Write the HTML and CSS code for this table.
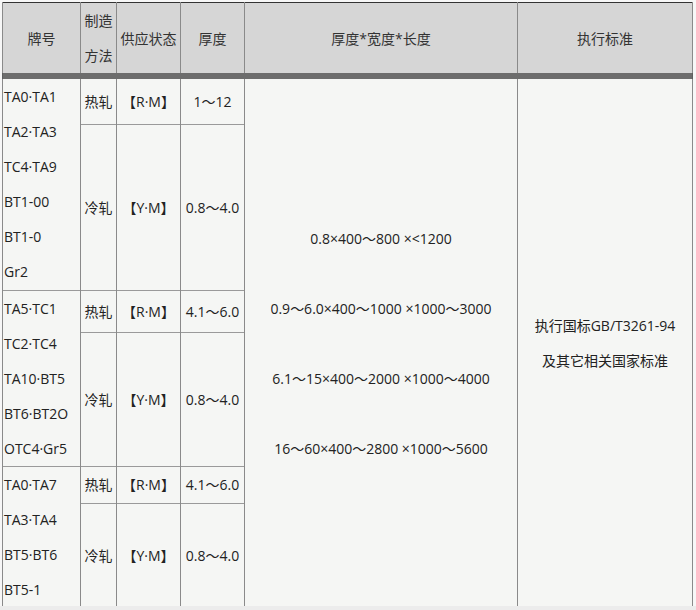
FILE: index.html
```html
<!DOCTYPE html>
<html lang="zh">
<head>
<meta charset="utf-8">
<title>钛板规格</title>
<link rel="stylesheet" href="styles.css">
</head>
<body>
<div class="wrap">
<table class="spec">
  <colgroup>
    <col class="c1"><col class="c2"><col class="c3"><col class="c4"><col class="c5"><col class="c6">
  </colgroup>
  <thead>
    <tr class="head">
      <th>牌号</th>
      <th class="narrow">制造方法</th>
      <th>供应状态</th>
      <th>厚度</th>
      <th>厚度*宽度*长度</th>
      <th>执行标准</th>
    </tr>
    <tr class="band"><td colspan="6"></td></tr>
  </thead>
  <tbody>
    <tr class="r1">
      <td rowspan="2" class="grade">TA0·TA1<br>TA2·TA3<br>TC4·TA9<br>BT1-00<br>BT1-0<br>Gr2</td>
      <td>热轧</td>
      <td>【R·M】</td>
      <td>1～12</td>
      <td rowspan="6" class="sizes">
        <p>0.8×400～800 ×&lt;1200</p>
        <p>0.9～6.0×400～1000 ×1000～3000</p>
        <p>6.1～15×400～2000 ×1000～4000</p>
        <p>16～60×400～2800 ×1000～5600</p>
      </td>
      <td rowspan="6" class="std">执行国标GB/T3261-94<br>及其它相关国家标准</td>
    </tr>
    <tr class="r2">
      <td>冷轧</td>
      <td>【Y·M】</td>
      <td>0.8～4.0</td>
    </tr>
    <tr class="r3">
      <td rowspan="2" class="grade">TA5·TC1<br>TC2·TC4<br>TA10·BT5<br>BT6·BT2O<br>OTC4·Gr5</td>
      <td>热轧</td>
      <td>【R·M】</td>
      <td>4.1～6.0</td>
    </tr>
    <tr class="r4">
      <td>冷轧</td>
      <td>【Y·M】</td>
      <td>0.8～4.0</td>
    </tr>
    <tr class="r5">
      <td rowspan="2" class="grade">TA0·TA7<br>TA3·TA4<br>BT5·BT6<br>BT5-1</td>
      <td>热轧</td>
      <td>【R·M】</td>
      <td>4.1～6.0</td>
    </tr>
    <tr class="r6">
      <td>冷轧</td>
      <td>【Y·M】</td>
      <td>0.8～4.0</td>
    </tr>
  </tbody>
</table>
</div>
</body>
</html>
```
FILE: styles.css
```css
html, body {
  margin: 0;
  padding: 0;
  overflow: hidden;
  height: 610px;
  background: #ececec;
}
body {
  font-family: "Open Sans", "Noto Sans CJK SC", sans-serif;
  font-size: 14px;
  color: #222;
}
.wrap {
  padding: 2px 0 0 2px;
  height: 604px;
  overflow: hidden;
  background: #f7f7f7;
  width: 694px;
}
.spec {
  border-collapse: collapse;
  table-layout: fixed;
  width: 690px;
  border-left: 1px solid #333;
  border-right: 1px solid #333;
  border-top: 1px solid #333;
}
.c1 { width: 78px; }
.c2 { width: 36px; }
.c3 { width: 64px; }
.c4 { width: 64px; }
.c5 { width: 273px; }
.c6 { width: 175px; }

.spec th, .spec td {
  border-left: 1px solid #8a8a8a;
  border-right: 1px solid #8a8a8a;
  padding: 0;
  text-align: center;
  vertical-align: middle;
}
.head th {
  background: #d6d6d6;
  font-weight: normal;
  color: #333;
  height: 70px;
  line-height: 35px;
}
.head th.narrow {
  padding: 0 3px;
}
.band td {
  height: 6px;
  background: #6d6d6d;
  border-color: #5e5e5e;
}
.spec tbody td {
  background: #f5f6f4;
  border-top: 1px solid #9a9a9a;
  line-height: 35px;
}
.spec tbody tr:first-child td {
  border-top: none;
}
.spec td.grade {
  text-align: left;
  padding-left: 1px;
}
.r1 { height: 45px; }
.r2 { height: 166px; }
.r3 { height: 42px; }
.r4 { height: 133px; }
.r5 { height: 37px; }
.r6 { height: 104px; }

.sizes p {
  margin: 0;
  line-height: 35px;
}
.sizes p + p {
  margin-top: 35px;
}
.spec td.std {
  line-height: 35px;
}
```
